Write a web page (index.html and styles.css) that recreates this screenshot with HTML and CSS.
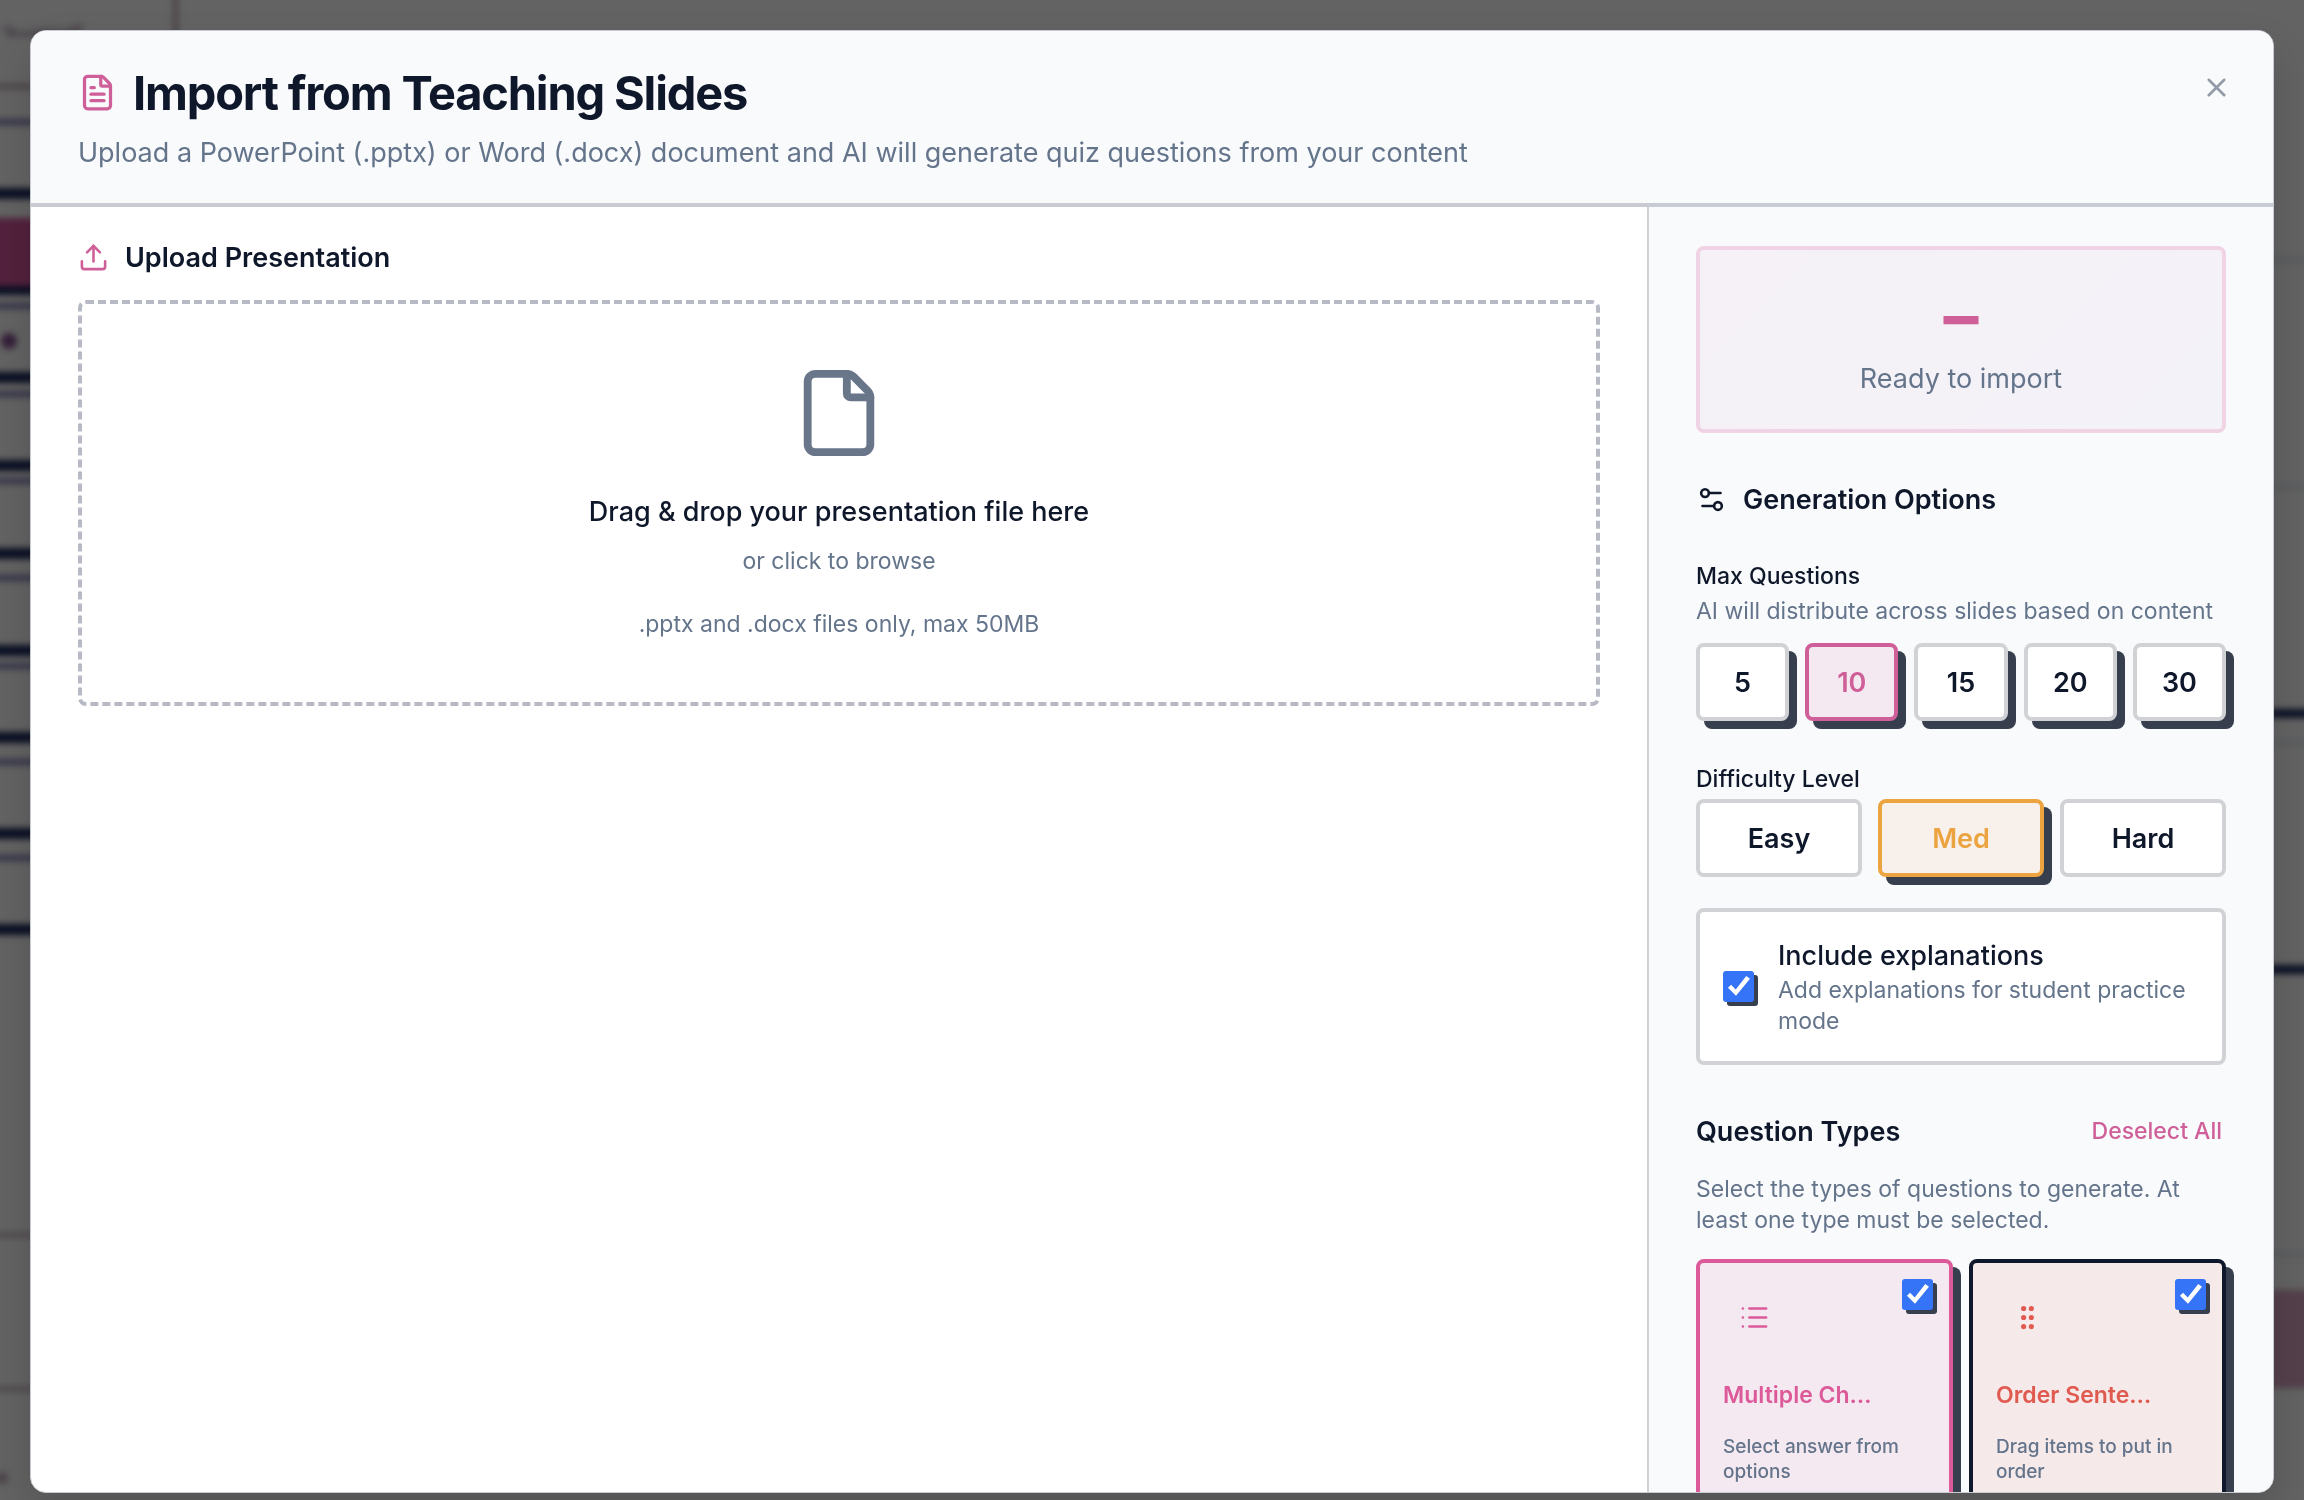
FILE: index.html
```html
<!DOCTYPE html>
<html lang="en">
<head>
  <meta charset="UTF-8" />
  <meta name="viewport" content="width=device-width, initial-scale=1.0" />
  <title>Import from Teaching Slides</title>
  <link rel="stylesheet" href="styles.css">
</head>
<body>
  <!-- blurred page behind the dialog -->
  <div class="backdrop" aria-hidden="true">
    <svg class="backdrop-left" width="200" height="1500" viewBox="0 0 200 1500">
      <rect x="-20" y="218" width="120" height="70" fill="#53213d" />
      <g fill="#0b1024">
        <rect x="-20" y="188" width="120" height="11" />
        <rect x="-20" y="286" width="120" height="9" />
        <rect x="-20" y="372" width="120" height="11" />
        <rect x="-20" y="460" width="120" height="11" />
        <rect x="-20" y="548" width="120" height="11" />
        <rect x="-20" y="645" width="120" height="11" />
        <rect x="-20" y="732" width="120" height="11" />
        <rect x="-20" y="828" width="120" height="11" />
        <rect x="-20" y="924" width="120" height="11" />
      </g>
      <g fill="#35344a">
        <rect x="-20" y="119" width="120" height="6" />
        <rect x="-20" y="303" width="120" height="6" />
        <rect x="-20" y="391" width="120" height="6" />
        <rect x="-20" y="478" width="120" height="6" />
        <rect x="-20" y="575" width="120" height="6" />
        <rect x="-20" y="663" width="120" height="6" />
        <rect x="-20" y="759" width="120" height="6" />
        <rect x="-20" y="855" width="120" height="6" />
      </g>
      <g fill="#4c4349">
        <rect x="-20" y="84" width="120" height="5" />
        <rect x="-20" y="1233" width="120" height="4" />
        <rect x="-20" y="1387" width="120" height="4" />
        <rect x="173" y="-20" width="5" height="100" />
        <circle cx="2" cy="1478" r="6" />
      </g>
      <path d="M2 26h10l6 6 26-4 20 1 18-6v14H8z" fill="#504b50" />
      <circle cx="9" cy="341" r="8" fill="#35203a" />
    </svg>
    <svg class="backdrop-right" width="60" height="1500" viewBox="0 0 60 1500">
      <rect x="0" y="709" width="80" height="9" fill="#0b1024" />
      <rect x="0" y="965" width="80" height="9" fill="#0b1024" />
      <rect x="0" y="1290" width="80" height="98" fill="#54404b" />
      <g fill="#585a5d">
        <rect x="0" y="258" width="80" height="4" />
        <rect x="0" y="485" width="80" height="4" />
        <rect x="0" y="741" width="80" height="4" />
        <rect x="0" y="1252" width="80" height="4" />
      </g>
    </svg>
  </div>

  <div class="overlay">
    <div class="modal" role="dialog" aria-modal="true" aria-labelledby="modalTitle">
      <header class="modal-header">
        <div class="modal-heading">
          <h1 id="modalTitle">
            <svg class="icon icon-title" viewBox="0 0 24 24"><path d="M6 22a2 2 0 0 1-2-2V4a2 2 0 0 1 2-2h8a2.4 2.4 0 0 1 1.704.706l3.588 3.588A2.4 2.4 0 0 1 20 8v12a2 2 0 0 1-2 2z"/><path d="M14 2v5a1 1 0 0 0 1 1h5"/><path d="M10 9H8"/><path d="M16 13H8"/><path d="M16 17H8"/></svg>
            Import from Teaching Slides
          </h1>
          <p>Upload a PowerPoint (.pptx) or Word (.docx) document and AI will generate quiz questions from your content</p>
        </div>
        <button class="close-btn" type="button" aria-label="Close">
          <svg class="icon" viewBox="0 0 24 24"><path d="M18 6 6 18"/><path d="m6 6 12 12"/></svg>
        </button>
      </header>

      <div class="modal-body">
        <main class="upload">
          <h2>
            <svg class="icon icon-pink" viewBox="0 0 24 24"><path d="M12 3v12"/><path d="m17 8-5-5-5 5"/><path d="M21 15v4a2 2 0 0 1-2 2H5a2 2 0 0 1-2-2v-4"/></svg>
            Upload Presentation
          </h2>
          <button class="dropzone" type="button">
            <svg class="icon icon-file" viewBox="0 0 24 24"><path d="M6 22a2 2 0 0 1-2-2V4a2 2 0 0 1 2-2h8a2.4 2.4 0 0 1 1.704.706l3.588 3.588A2.4 2.4 0 0 1 20 8v12a2 2 0 0 1-2 2z"/><path d="M14 2v5a1 1 0 0 0 1 1h5"/></svg>
            <span class="drop-title">Drag &amp; drop your presentation file here</span>
            <span class="drop-text">or click to browse</span>
            <span class="drop-hint">.pptx and .docx files only, max 50MB</span>
          </button>
        </main>

        <aside class="options">
          <div class="status">
            <span class="status-count">–</span>
            <span class="status-text">Ready to import</span>
          </div>

          <h2 class="options-title">
            <svg class="icon" viewBox="0 0 24 24"><path d="M14 17H5"/><path d="M19 7h-9"/><circle cx="17" cy="17" r="3"/><circle cx="7" cy="7" r="3"/></svg>
            Generation Options
          </h2>

          <div class="field count-field">
            <h3>Max Questions</h3>
            <p class="hint">AI will distribute across slides based on content</p>
            <div class="btn-row count-row">
              <button class="opt raised" type="button">5</button>
              <button class="opt raised selected" type="button">10</button>
              <button class="opt raised" type="button">15</button>
              <button class="opt raised" type="button">20</button>
              <button class="opt raised" type="button">30</button>
            </div>
          </div>

          <div class="field">
            <h3>Difficulty Level</h3>
            <div class="btn-row">
              <button class="opt" type="button">Easy</button>
              <button class="opt raised medium" type="button">Med</button>
              <button class="opt" type="button">Hard</button>
            </div>
          </div>

          <label class="explain" for="explanations">
            <input class="check" type="checkbox" id="explanations" checked>
            <span class="explain-text">
              <span class="explain-title">Include explanations</span>
              <span class="hint">Add explanations for student practice mode</span>
            </span>
          </label>

          <div class="types-head">
            <h2>Question Types</h2>
            <button class="link-btn" type="button">Deselect All</button>
          </div>
          <p class="hint">Select the types of questions to generate. At least one type must be selected.</p>

          <div class="type-grid">
            <label class="type-card type-choice" for="typeChoice">
              <input class="check" type="checkbox" id="typeChoice" checked>
              <span class="type-icon">
                <svg class="icon" viewBox="0 0 24 24"><path d="M3 5h.01"/><path d="M3 12h.01"/><path d="M3 19h.01"/><path d="M8 5h13"/><path d="M8 12h13"/><path d="M8 19h13"/></svg>
              </span>
              <span class="type-name">Multiple Ch…</span>
              <span class="type-desc">Select answer from options</span>
            </label>
            <label class="type-card type-order" for="typeOrder">
              <input class="check" type="checkbox" id="typeOrder" checked>
              <span class="type-icon">
                <svg class="icon" viewBox="0 0 24 24"><circle cx="9" cy="12" r="1"/><circle cx="9" cy="5" r="1"/><circle cx="9" cy="19" r="1"/><circle cx="15" cy="12" r="1"/><circle cx="15" cy="5" r="1"/><circle cx="15" cy="19" r="1"/></svg>
              </span>
              <span class="type-name">Order Sente…</span>
              <span class="type-desc">Drag items to put in order</span>
            </label>
          </div>
        </aside>
      </div>
    </div>
  </div>
</body>
</html>
```

FILE: styles.css
```css
* { box-sizing: border-box; }
:root {
  --ink: #0f172a;
  --muted: #64748b;
  --pink: #cf5f98;
  --line: #d0d2d6;
  --shadow: #373f4f;
}
body {
  font-family: Inter, "Liberation Sans", sans-serif;
  font-size: 27px;
  line-height: 39px;
  color: var(--ink);
  background: #636363;
  margin: 0;
  height: 100vh;
  overflow: hidden;
}
h1, h2, h3, p { margin: 0; }
button {
  font: inherit;
  color: inherit;
  cursor: pointer;
}
.icon {
  width: 31px;
  height: 31px;
  flex-shrink: 0;
  fill: none;
  stroke: currentColor;
  stroke-width: 2;
  stroke-linecap: round;
  stroke-linejoin: round;
}
.backdrop {
  position: fixed;
  inset: 0;
  display: flex;
  justify-content: space-between;
  overflow: hidden;
}
.backdrop svg {
  filter: blur(3px);
  flex-shrink: 0;
  overflow: visible;
}
.overlay {
  position: relative;
  height: 100vh;
  padding: 30px 30px 7px;
}
.modal {
  display: flex;
  flex-direction: column;
  height: 100%;
  background: #fff;
  border: 1px solid #c9cbd2;
  border-radius: 16px;
  overflow: hidden;
  box-shadow: 0 20px 40px rgba(0, 0, 0, 0.15);
}
.modal-header {
  display: flex;
  justify-content: space-between;
  align-items: flex-start;
  padding: 38px 47px 31px;
  background: #f9fafc;
  border-bottom: 4px solid #c9cbd2;
}
.modal-header h1 {
  display: flex;
  align-items: center;
  gap: 16px;
  font-size: 47px;
  line-height: 47px;
  font-weight: 700;
  letter-spacing: -0.025em;
}
.icon-title {
  width: 39px;
  height: 39px;
  color: var(--pink);
}
.modal-header p {
  margin-top: 17px;
  color: var(--muted);
}
.close-btn {
  display: flex;
  padding: 0;
  margin-top: 3px;
  margin-right: -6px;
  background: none;
  border: none;
  color: #949ba8;
}
.modal-body {
  display: flex;
  flex: 1;
  min-height: 0;
}
h2 {
  font-size: 27px;
  line-height: 39px;
  font-weight: 600;
}
.upload {
  flex: 1;
  padding: 31px 47px;
}
.upload h2 {
  display: flex;
  align-items: center;
  gap: 16px;
  margin-bottom: 23px;
}
.icon-pink { color: var(--pink); }
.dropzone {
  display: flex;
  flex-direction: column;
  align-items: center;
  width: 100%;
  padding: 62px;
  background: none;
  border: 4px dashed #b7bac4;
  border-radius: 8px;
}
.icon-file {
  width: 94px;
  height: 94px;
  color: #697589;
}
.drop-title {
  margin-top: 32px;
  font-weight: 500;
}
.drop-text {
  margin-top: 15px;
  font-size: 23px;
  line-height: 31px;
  color: var(--muted);
}
.drop-hint {
  margin-top: 32px;
  font-size: 23px;
  line-height: 31px;
  color: var(--muted);
}
.options {
  width: 626px;
  flex-shrink: 0;
  padding: 39px 47px;
  background: #f9fafc;
  border-left: 2px solid #cfd1d5;
  overflow: hidden;
}
.status {
  display: flex;
  flex-direction: column;
  align-items: center;
  padding: 27px 27px 31px;
  border: 4px solid #f0d3e4;
  border-radius: 8px;
  background: linear-gradient(135deg, #f5f1f6, #f3f2f8);
}
.status-count {
  font-size: 70px;
  line-height: 78px;
  font-weight: 700;
  color: var(--pink);
}
.status-text {
  margin-top: 4px;
  color: var(--muted);
}
.options-title {
  display: flex;
  align-items: center;
  gap: 16px;
  margin: 47px 0 38px;
}
.field { margin-bottom: 31px; }
.count-field { margin-bottom: 39px; }
h3 {
  font-size: 23px;
  line-height: 39px;
  font-weight: 500;
}
.hint {
  display: block;
  font-size: 23px;
  line-height: 31px;
  color: var(--muted);
}
.btn-row {
  display: flex;
  gap: 16px;
}
.count-row { margin-top: 16px; }
.opt {
  flex: 1;
  height: 78px;
  padding: 0;
  font-weight: 600;
  background: #fff;
  border: 4px solid var(--line);
  border-radius: 8px;
}
.raised { box-shadow: 8px 8px 0 var(--shadow); }
.selected {
  color: var(--pink);
  border-color: var(--pink);
  background: #f4e9f1;
}
.medium {
  color: #eba440;
  border-color: #eba440;
  background: #f8f0eb;
}
.explain {
  display: flex;
  align-items: center;
  gap: 24px;
  padding: 24px 23px;
  background: #fff;
  border: 4px solid var(--line);
  border-radius: 8px;
}
.explain-title {
  display: block;
  font-weight: 500;
}
.check {
  appearance: none;
  width: 31px;
  height: 31px;
  margin: 0;
  flex-shrink: 0;
  border-radius: 3px;
  background: #3574f6;
  box-shadow: 4px 4px 0 var(--shadow);
}
.check:checked::before {
  content: "";
  display: block;
  width: 31px;
  height: 31px;
  background: #fff;
  clip-path: polygon(16% 54%, 26% 44%, 41% 60%, 75% 16%, 87% 25%, 42% 80%);
}
.types-head {
  display: flex;
  justify-content: space-between;
  align-items: center;
  margin: 47px 0 23px;
}
.link-btn {
  padding: 0 4px;
  font-size: 23px;
  font-weight: 500;
  color: var(--pink);
  background: none;
  border: none;
}
.type-grid {
  display: grid;
  grid-template-columns: 1fr 1fr;
  gap: 16px;
  margin-top: 23px;
}
.type-card {
  position: relative;
  display: flex;
  flex-direction: column;
  padding: 23px;
  border: 4px solid;
  border-radius: 8px;
  box-shadow: 8px 8px 0 var(--shadow);
}
.type-card .check {
  position: absolute;
  top: 16px;
  right: 16px;
}
.type-choice {
  border-color: #dc5a99;
  background: #f5e9f1;
}
.type-order {
  border-color: var(--ink);
  background: #f5e9e9;
}
.type-choice .type-icon, .type-choice .type-name { color: #dc5a99; }
.type-order .type-icon, .type-order .type-name { color: #e05a50; }
.type-icon {
  display: flex;
  align-items: center;
  justify-content: center;
  width: 62px;
  height: 62px;
}
.type-name {
  margin-top: 32px;
  font-size: 23px;
  line-height: 31px;
  font-weight: 600;
  white-space: nowrap;
}
.type-desc {
  margin-top: 23px;
  font-size: 19px;
  line-height: 25px;
  font-weight: 500;
  color: var(--muted);
}
```
